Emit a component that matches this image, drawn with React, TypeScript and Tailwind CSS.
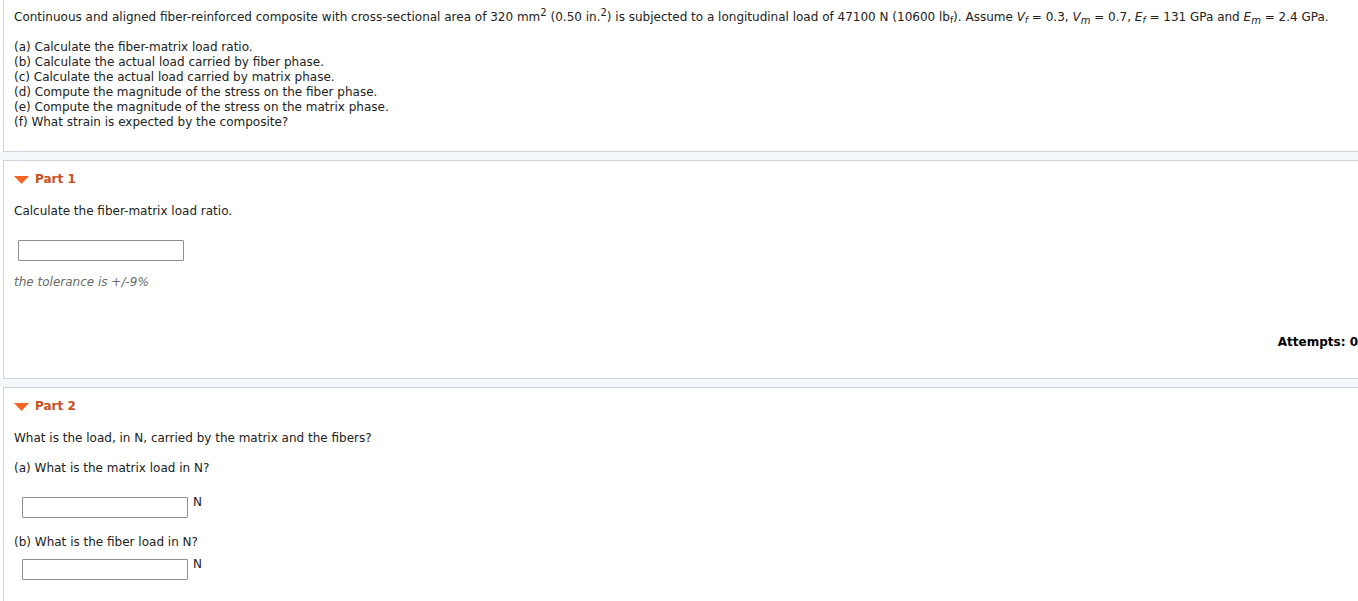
import React from 'react'

const parts = [
  '(a) Calculate the fiber-matrix load ratio.',
  '(b) Calculate the actual load carried by fiber phase.',
  '(c) Calculate the actual load carried by matrix phase.',
  '(d) Compute the magnitude of the stress on the fiber phase.',
  '(e) Compute the magnitude of the stress on the matrix phase.',
  '(f) What strain is expected by the composite?',
]

function Caret() {
  return (
    <svg width="15" height="8" viewBox="0 0 15 8" className="mr-[6px] shrink-0">
      <polygon points="0,0 15,0 7.5,8" fill="#f26522" />
    </svg>
  )
}

function PartHeader({ label }: { label: string }) {
  return (
    <div className="flex h-[15px] items-center">
      <Caret />
      <span className="font-bold text-[#c8501e]">{label}</span>
    </div>
  )
}

function AnswerBox({ unit, w }: { unit?: string; w: string }) {
  return (
    <div className="flex items-start">
      <div className={`${w} h-[21px] rounded-[1px] border border-[#8f8f8f] bg-white`} />
      {unit ? <span className="ml-[5px] -mt-[2px] text-[12px] text-[#222]">{unit}</span> : null}
    </div>
  )
}

function Gap() {
  return <div className="h-[8px] shrink-0 bg-[#f4f7fa]" />
}

export default function App() {
  return (
    <div
      className="flex h-[601px] w-[1358px] flex-col overflow-hidden bg-white text-[12px] leading-[15px] text-[#222]"
      style={{ fontFamily: 'Verdana, "DejaVu Sans", sans-serif' }}
    >
      <section className="ml-[3px] border-b border-l border-[#cdd5e1] pb-[21px] pl-[10px] pt-[10px]">
        <p className="whitespace-nowrap">
          Continuous and aligned fiber-reinforced composite with cross-sectional area of 320 mm
          <sup className="text-[10px]">2</sup> (0.50 in.<sup className="text-[10px]">2</sup>) is subjected to a
          longitudinal load of 47100 N (10600 lb<sub className="text-[9px]">f</sub>). Assume <i>V</i>
          <sub className="text-[9px] italic">f</sub> = 0.3, <i>V</i>
          <sub className="text-[10px] italic">m</sub> = 0.7, <i>E</i>
          <sub className="text-[9px] italic">f</sub> = 131 GPa and <i>E</i>
          <sub className="text-[10px] italic">m</sub> = 2.4 GPa.
        </p>
        <div className="mt-[15px]">
          {parts.map((p) => (
            <div key={p}>{p}</div>
          ))}
        </div>
      </section>

      <Gap />

      <section className="ml-[3px] border-b border-l border-t border-[#cdd5e1] pb-[28px] pl-[10px] pt-[11px]">
        <PartHeader label="Part 1" />
        <p className="mt-[17px]">Calculate the fiber-matrix load ratio.</p>
        <div className="mt-[21px] pl-[4px]">
          <AnswerBox w="w-[166px]" />
        </div>
        <p className="mt-[14px] italic text-[#6b6b6b]">the tolerance is +/-9%</p>
        <div className="mt-[45px] text-right font-bold text-black">Attempts: 0</div>
      </section>

      <Gap />

      <section className="ml-[3px] flex-1 border-l border-t border-[#cdd5e1] pl-[10px] pt-[11px]">
        <PartHeader label="Part 2" />
        <p className="mt-[17px]">What is the load, in N, carried by the matrix and the fibers?</p>
        <p className="mt-[15px]">(a) What is the matrix load in N?</p>
        <div className="mt-[21px] pl-[8px]">
          <AnswerBox w="w-[166px]" unit="N" />
        </div>
        <p className="mt-[17px]">(b) What is the fiber load in N?</p>
        <div className="mt-[9px] pl-[8px]">
          <AnswerBox w="w-[166px]" unit="N" />
        </div>
      </section>
    </div>
  )
}
